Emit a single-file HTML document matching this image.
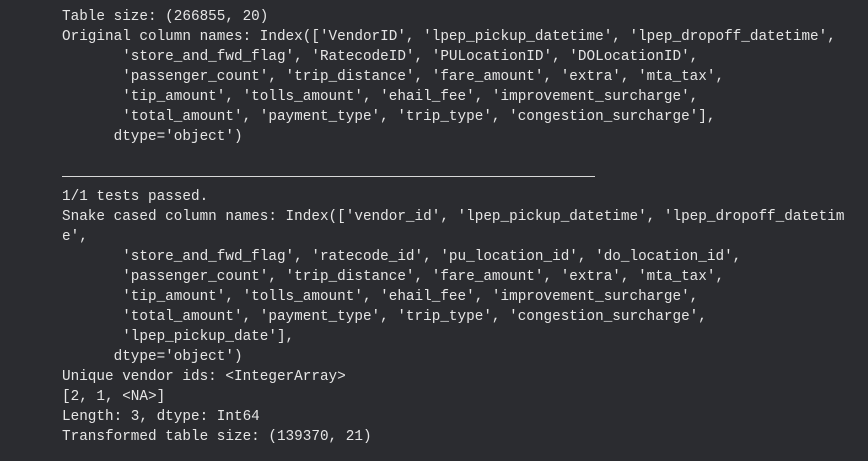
<!DOCTYPE html>
<html><head><style>
html,body{margin:0;padding:0;background:#2b2c30;width:868px;height:461px;overflow:hidden}
pre{margin:0;position:absolute;left:62px;top:7px;font-family:"Liberation Mono","DejaVu Sans Mono",monospace;font-size:14.33px;line-height:20px;color:#e6e6e6;white-space:pre}
.rule{display:inline-block;width:533px;height:0;border-top:1px solid #d8d8d8;vertical-align:middle}
</style></head><body>
<pre>Table size: (266855, 20)
Original column names: Index(['VendorID', 'lpep_pickup_datetime', 'lpep_dropoff_datetime',
       'store_and_fwd_flag', 'RatecodeID', 'PULocationID', 'DOLocationID',
       'passenger_count', 'trip_distance', 'fare_amount', 'extra', 'mta_tax',
       'tip_amount', 'tolls_amount', 'ehail_fee', 'improvement_surcharge',
       'total_amount', 'payment_type', 'trip_type', 'congestion_surcharge'],
      dtype='object')

<span class="rule"></span>
1/1 tests passed.
Snake cased column names: Index(['vendor_id', 'lpep_pickup_datetime', 'lpep_dropoff_datetim
e',
       'store_and_fwd_flag', 'ratecode_id', 'pu_location_id', 'do_location_id',
       'passenger_count', 'trip_distance', 'fare_amount', 'extra', 'mta_tax',
       'tip_amount', 'tolls_amount', 'ehail_fee', 'improvement_surcharge',
       'total_amount', 'payment_type', 'trip_type', 'congestion_surcharge',
       'lpep_pickup_date'],
      dtype='object')
Unique vendor ids: &lt;IntegerArray&gt;
[2, 1, &lt;NA&gt;]
Length: 3, dtype: Int64
Transformed table size: (139370, 21)</pre>
</body></html>
